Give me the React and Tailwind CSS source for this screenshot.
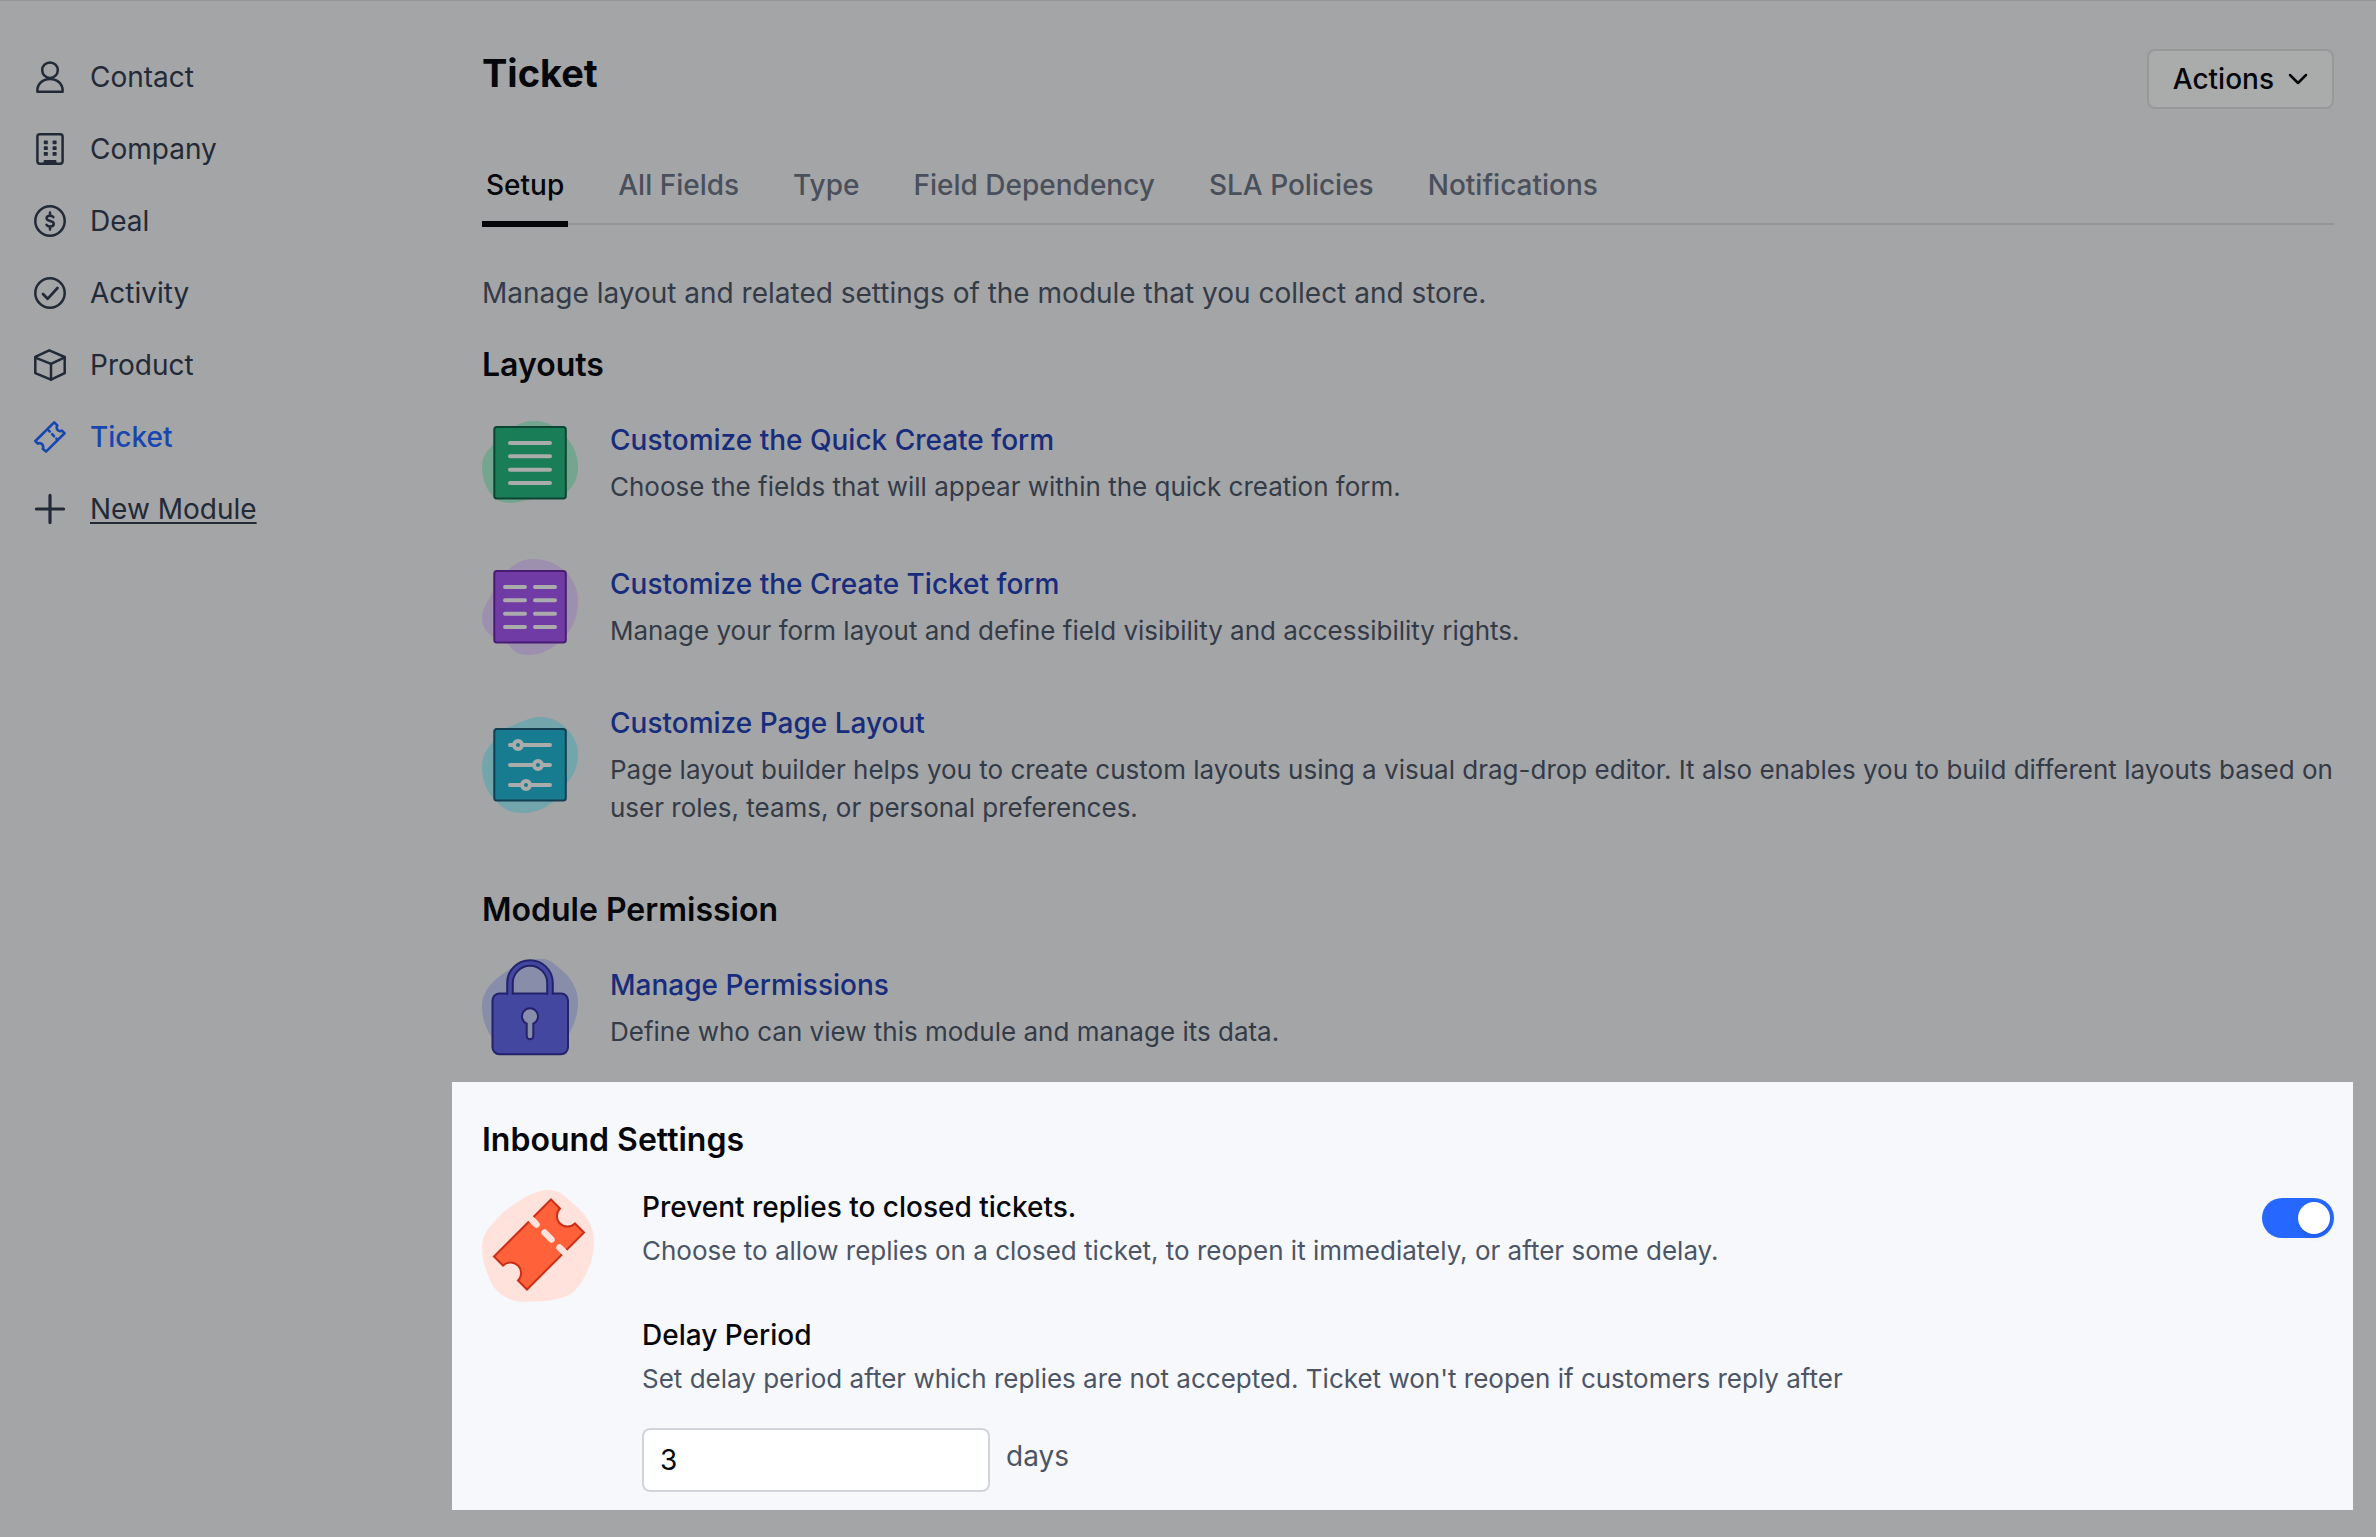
import React, { useState } from "react";

const lineProps = {
  viewBox: "0 0 32 32",
  fill: "none",
  stroke: "currentColor",
  strokeWidth: 2.5,
  strokeLinecap: "round",
  strokeLinejoin: "round",
  className: "size-8 shrink-0",
  "aria-hidden": true,
};

const ContactIcon = () => (
  <svg {...lineProps}>
    <circle cx="16" cy="9.2" r="7.8" />
    <path d="M3.4 30.7v-1.5C3.4 23 8.6 17.9 16 17.9S28.6 23 28.6 29.2v1.5Z" />
  </svg>
);

const CompanyIcon = () => (
  <svg {...lineProps}>
    <rect x="3.4" y="1.3" width="25.2" height="29.4" rx="2.4" />
    <g fill="currentColor" stroke="none">
      <rect x="9.8" y="7.4" width="4" height="3.8" rx="0.6" />
      <rect x="18.6" y="7.4" width="4" height="3.8" rx="0.6" />
      <rect x="9.8" y="13.2" width="4" height="3.8" rx="0.6" />
      <rect x="18.6" y="13.2" width="4" height="3.8" rx="0.6" />
      <rect x="9.8" y="19" width="4" height="3.8" rx="0.6" />
      <rect x="18.6" y="19" width="4" height="3.8" rx="0.6" />
      <path d="M9.5 31v-2.600q0-1.400 1.400-1.400h10.200q1.400 0 1.400 1.400V31Z" />
    </g>
  </svg>
);

const DealIcon = () => (
  <svg {...lineProps}>
    <circle cx="16" cy="16" r="14.7" />
    <path d="M19.400 12.200c-.6-1-1.800-1.400-3.300-1.400-2 0-3.500.9-3.500 2.500 0 3.700 7.200 1.700 7.200 5.500 0 1.700-1.600 2.700-3.600 2.700-1.700 0-3-.5-3.700-1.600M16 7.400v3.300M16 21.600v3" />
  </svg>
);

const ActivityIcon = () => (
  <svg {...lineProps}>
    <circle cx="16" cy="16" r="14.7" />
    <path strokeWidth="2.7" d="m9 17 4.600 4.800L23.500 11" />
  </svg>
);

const ProductIcon = () => (
  <svg {...lineProps}>
    <path d="M15.200 1.300 1.300 7.900v16.200L17 30.700l13.700-6.500V8Z" />
    <path d="M1.300 8.600 17 14.900 30.700 8.300M17 14.900v15.800" />
  </svg>
);

const TicketIcon = () => (
  <svg {...lineProps} strokeWidth="2.6">
    <path d="M20.200 1.400 1.400 20l2.400 2.600c3.300-1.600 6.500 1.600 5 5.200L12 30.600 30.600 12.300l-2.600-2.700c-3.300 1.800-6.600-1.300-4.700-5.200Z" />
    <path d="m14.800 9.700 1 1M18.200 13.200l1.800 2M22.400 17.600l1 1" />
  </svg>
);

const PlusIcon = () => (
  <svg {...lineProps} strokeWidth="3.2">
    <path d="M16 2.400v27.200M2.400 16h27.200" />
  </svg>
);

const artProps = { viewBox: "0 1 96 96", className: "size-24 shrink-0 overflow-visible", "aria-hidden": true };

const QuickFormArt = () => (
  <svg {...artProps}>
    <path
      fill="#74a58f"
      d="M51 7C60 7 66 9 71 12 78 16 82 21 85 24 93 33 96 44 96 53 96 64 92 72 85 78 74 86 58 83 46 86 40 87 34 89 28 89 20 89 15 86 11 82 4 75 0 64 0 53 0 42 5 37 11 31 18 24 25 17 33 12 38 9 44 7 51 7Z"
    />
    <rect x="12.3" y="13" width="71.5" height="71.5" rx="2.5" fill="#197d57" stroke="#0d4434" strokeWidth="2" />
    <path d="M28 29h40M28 42.300h40M28 55.700h40M28 69h40" stroke="#aaabab" strokeWidth="4" strokeLinecap="round" />
  </svg>
);

const TicketFormArt = () => (
  <svg {...artProps}>
    <path
      fill="#9d8fae"
      d="M51 1C65 1 77 7 85 15 92 23 96 32 96 43 96 56 92 68 85 76 75 88 62 97 47 97 37 97 32 94 27 87 22 81 14 82 10 78 3 73 0 67 0 60 0 49 8 42 12 31 15 23 18 19 25 13 33 5 41 1 51 1Z"
    />
    <rect x="12.3" y="13" width="71.5" height="71.5" rx="2.5" fill="#713ba6" stroke="#471d72" strokeWidth="2" />
    <path
      d="M23 29h20M23 42.300h20M23 55.700h20M23 69h20M53 29h20M53 42.300h20M53 55.700h20M53 69h20"
      stroke="#aaabab"
      strokeWidth="4"
      strokeLinecap="round"
    />
  </svg>
);

const PageLayoutArt = () => (
  <svg {...artProps}>
    <path
      fill="#73a5ac"
      d="M59 1C70 1 78 6 84 12 91 19 96 27 96 38 96 52 91 60 85 67 80 75 77 82 71 86 62 93 52 97 41 97 29 97 21 93 15 86 5 77 0 65 0 51 0 41 4 33 11 26 15 20 18 15 24 12 36 8 46 1 59 1Z"
    />
    <rect x="12.3" y="13" width="71.5" height="71.5" rx="2.5" fill="#177c90" stroke="#123e50" strokeWidth="2" />
    <path d="M28 29h40M28 49h40M28 69h40" stroke="#aaabab" strokeWidth="4" strokeLinecap="round" />
    <g fill="#177c90" stroke="#aaabab" strokeWidth="4">
      <circle cx="36" cy="29" r="4" />
      <circle cx="56" cy="49" r="4" />
      <circle cx="44" cy="69" r="4" />
    </g>
  </svg>
);

const LockArt = () => (
  <svg {...artProps}>
    <path
      fill="#888ea9"
      d="M62 0C70 1 76 8 83 14 91 22 96 32 96 43 96 56 92 66 87 75L80 90H14L10 79C4 70 0 60 0 48 0 32 10 22 25 12 38 4 50-1 62 0Z"
    />
    <rect x="10.5" y="34.5" width="75.5" height="60.8" rx="7" fill="#4447a0" stroke="#24226c" strokeWidth="2" />
    <path d="M28 35.400V24a20 20 0 0 1 40 0v11.400" fill="none" stroke="#24226c" strokeWidth="7.6" />
    <path d="M28 36.500V24a20 20 0 0 1 40 0v12.500" fill="none" stroke="#4447a0" strokeWidth="3.6" />
    <path
      d="M44.700 64.600a8 8 0 1 1 6.600 0V77a3.300 3.300 0 0 1-6.600 0Z"
      fill="#888ea9"
      stroke="#24226c"
      strokeWidth="2"
    />
  </svg>
);

const ClosedTicketArt = () => (
  <svg viewBox="0 0 112 112" className="size-28 shrink-0" aria-hidden="true">
    <path
      fill="#ffe2dc"
      d="M67 0C76 0 81 4 87 10 95 17 102 22 106 30 111 38 112 46 112 52 112 67 107 79 101 90 95 100 88 106 79 108 67 111 54 112 43 112 33 112 26 109 20 105 12 99 9 93 7 87 2 76 0 67 0 57 0 47 5 39 12 32 19 24 26 18 34 13 44 6 55 0 67 0Z"
    />
    <path
      d="M69 9.500 78 18.500A10.600 10.600 0 0 0 93 33.500L102 42.500 45 99.500 36 90.500A10.600 10.600 0 0 0 21 75.500L12 66.500Z"
      fill="#ff623b"
      stroke="#c92f17"
      strokeWidth="2"
    />
    <path d="m47 27 6.500 6.500M78.500 58.500l6.500 6.500" stroke="#ffe2dc" strokeWidth="6.5" />
    <path d="m51.500 31.500 3 3M62.500 42.500l7 7M77.500 57.500l3 3" stroke="#ffe2dc" strokeWidth="6.5" strokeLinecap="round" />
  </svg>
);

const modules = [
  { label: "Contact", Icon: ContactIcon },
  { label: "Company", Icon: CompanyIcon },
  { label: "Deal", Icon: DealIcon },
  { label: "Activity", Icon: ActivityIcon },
  { label: "Product", Icon: ProductIcon },
  { label: "Ticket", Icon: TicketIcon, active: true },
  { label: "New Module", Icon: PlusIcon, underlined: true },
];

const tabs = ["Setup", "All Fields", "Type", "Field Dependency", "SLA Policies", "Notifications"];

const layouts = [
  {
    title: "Customize the Quick Create form",
    text: "Choose the fields that will appear within the quick creation form.",
    Art: QuickFormArt,
  },
  {
    title: "Customize the Create Ticket form",
    text: "Manage your form layout and define field visibility and accessibility rights.",
    Art: TicketFormArt,
  },
  {
    title: "Customize Page Layout",
    text: "Page layout builder helps you to create custom layouts using a visual drag-drop editor. It also enables you to build different layouts based on user roles, teams, or personal preferences.",
    Art: PageLayoutArt,
  },
];

function Sidebar() {
  return (
    <aside className="w-[452px] shrink-0 pt-10 pl-[34px]">
      <nav aria-label="Modules">
        <ul>
          {modules.map(({ label, Icon, active, underlined }) => (
            <li key={label}>
              <a
                href="#"
                aria-current={active ? "page" : undefined}
                className={`flex h-[72px] items-center gap-6 ${active ? "font-medium text-[#1746b0]" : "text-[#222a37]"}`}
              >
                <Icon />
                <span className={underlined ? "underline decoration-2 underline-offset-3" : ""}>{label}</span>
              </a>
            </li>
          ))}
        </ul>
      </nav>
    </aside>
  );
}

function SectionHeading({ children }) {
  return <h2 className="text-[32px] leading-[44px] font-semibold text-[#05070b]">{children}</h2>;
}

function SettingRow({ title, text, Art }) {
  return (
    <li className="flex items-center gap-8">
      <Art />
      <div>
        <a href="#" className="block font-medium text-[#172c7d]">
          {title}
        </a>
        <p className="mt-2 text-[26px] leading-[38px] text-[#333b47]">{text}</p>
      </div>
    </li>
  );
}

function InboundSettings() {
  const [enabled, setEnabled] = useState(true);
  const [days, setDays] = useState("3");
  return (
    <section className="-mr-[19px] -ml-[30px] mt-[26px] bg-[#f7f8fc] pt-9 pr-[19px] pb-[18px] pl-[30px]">
      <SectionHeading>Inbound Settings</SectionHeading>
      <div className="mt-7 flex items-start gap-12">
        <ClosedTicketArt />
        <div className="flex-1">
          <label htmlFor="prevent" className="block leading-[34px] font-medium text-[#05070b]">
            Prevent replies to closed tickets.
          </label>
          <p className="mt-2 text-[26px] leading-[38px] text-[#4b5565]">
            Choose to allow replies on a closed ticket, to reopen it immediately, or after some delay.
          </p>
          <label htmlFor="delay" className="mt-12 block leading-[34px] font-medium text-[#05070b]">
            Delay Period
          </label>
          <p className="mt-2 text-[26px] leading-[38px] text-[#4b5565]">
            Set delay period after which replies are not accepted. Ticket won't reopen if customers reply after
          </p>
          <div className="mt-[30px] flex items-start gap-4 text-[#4b5565]">
            <input
              id="delay"
              type="text"
              value={days}
              onChange={(e) => setDays(e.target.value)}
              className="h-16 w-[348px] rounded-lg border-2 border-[#d1d5db] bg-white px-4 text-[#05070b]"
            />
            <span className="leading-14">days</span>
          </div>
        </div>
        <input
          id="prevent"
          type="checkbox"
          role="switch"
          checked={enabled}
          onChange={(e) => setEnabled(e.target.checked)}
          className="mt-2 flex h-10 w-[72px] shrink-0 appearance-none rounded-full bg-gray-300 p-1 before:size-8 before:rounded-full before:bg-white before:shadow-md before:content-[''] checked:justify-end checked:bg-[#2668ff]"
        />
      </div>
    </section>
  );
}

export default function App() {
  return (
    <div className="flex min-h-screen border-t border-[#949597] bg-[#a4a5a7] font-['Inter',sans-serif] text-[28px] leading-10">
      <Sidebar />
      <main className="min-w-0 flex-1 pt-12 pr-[42px] pb-7 pl-[30px]">
        <header className="flex items-start justify-between">
          <h1 className="text-[38px] leading-12 font-bold text-[#05070b]">Ticket</h1>
          <button
            type="button"
            className="flex h-[60px] items-center gap-[14px] rounded-lg border-2 border-[#97989a] bg-[#aaabab] px-6 font-medium text-[#05070b]"
          >
            Actions
            <svg viewBox="0 0 20 12" fill="none" stroke="currentColor" strokeWidth="2.5" className="h-3 w-5" aria-hidden="true">
              <path d="m2 2 8 8 8-8" strokeLinecap="round" strokeLinejoin="round" />
            </svg>
          </button>
        </header>
        <div role="tablist" className="mt-9 flex gap-[46px] border-b-2 border-[#949597]">
          {tabs.map((tab, i) => (
            <button
              key={tab}
              type="button"
              role="tab"
              aria-selected={i === 0}
              className={`-mb-1 border-b-6 px-1 pt-5 pb-4 font-medium ${
                i === 0 ? "border-[#05070b] text-[#05070b]" : "border-transparent text-[#4a505b]"
              }`}
            >
              {tab}
            </button>
          ))}
        </div>
        <p className="mt-12 text-[#333b47]">
          Manage layout and related settings of the module that you collect and store.
        </p>
        <section className="mt-[30px]">
          <SectionHeading>Layouts</SectionHeading>
          <ul className="mt-7 flex flex-col gap-12">
            {layouts.map((row) => (
              <SettingRow key={row.title} {...row} />
            ))}
          </ul>
        </section>
        <section className="mt-[61px]">
          <SectionHeading>Module Permission</SectionHeading>
          <ul className="mt-7">
            <SettingRow
              title="Manage Permissions"
              text="Define who can view this module and manage its data."
              Art={LockArt}
            />
          </ul>
        </section>
        <InboundSettings />
      </main>
    </div>
  );
}
